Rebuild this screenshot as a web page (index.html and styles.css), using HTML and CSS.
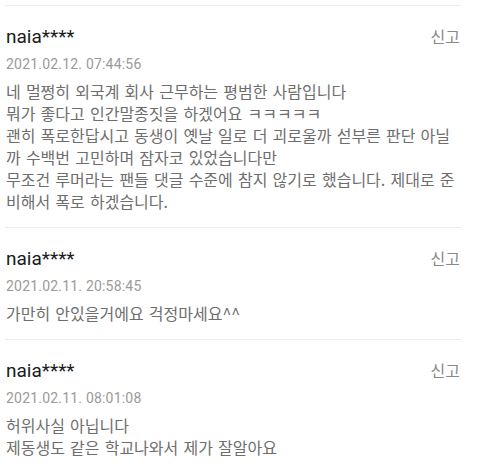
FILE: index.html
```html
<!DOCTYPE html>
<html lang="ko">
<head>
  <meta charset="UTF-8" />
  <meta name="viewport" content="width=device-width, initial-scale=1.0"/>
  <title>댓글</title>
  <link rel="stylesheet" href="styles.css">
</head>
<body>
  <ul class="comment-list">
    <li class="comment">
      <div class="comment-head">
        <span class="nick">naia****</span>
        <a class="report" href="#">신고</a>
      </div>
      <div class="date">2021.02.12. 07:44:56</div>
      <p class="text">네 멀쩡히 외국계 회사 근무하는 평범한 사람입니다<br>뭐가 좋다고 인간말종짓을 하겠어요 ㅋㅋㅋㅋㅋ<br>괜히 폭로한답시고 동생이 옛날 일로 더 괴로울까 섣부른 판단 아닐까 수백번 고민하며 잠자코 있었습니다만<br>무조건 루머라는 팬들 댓글 수준에 참지 않기로 했습니다. 제대로 준비해서 폭로 하겠습니다.</p>
    </li>
    <li class="comment">
      <div class="comment-head">
        <span class="nick">naia****</span>
        <a class="report" href="#">신고</a>
      </div>
      <div class="date">2021.02.11. 20:58:45</div>
      <p class="text">가만히 안있을거에요 걱정마세요^^</p>
    </li>
    <li class="comment">
      <div class="comment-head">
        <span class="nick">naia****</span>
        <a class="report" href="#">신고</a>
      </div>
      <div class="date">2021.02.11. 08:01:08</div>
      <p class="text">허위사실 아닙니다<br>제동생도 같은 학교나와서 제가 잘알아요</p>
    </li>
  </ul>
</body>
</html>
```

FILE: styles.css
```css
body {
  margin: 5px 19px 0 5px;
  background: #fff;
  font-family: Roboto, "Noto Sans CJK KR", sans-serif;
}
.comment-list {
  list-style: none;
  margin: 0;
  padding: 0;
}
.comment {
  border-top: 1px solid #ececec;
  padding: 18px 1px 15px 1px;
}
.comment-head {
  display: flex;
  justify-content: space-between;
  align-items: baseline;
}
.nick {
  font-size: 19px;
  line-height: 24px;
  color: #1b1b1b;
}
.report {
  font-family: "Noto Sans CJK KR", sans-serif;
  font-size: 16px;
  line-height: 24px;
  color: #8a8a8a;
  text-decoration: none;
}
.date {
  margin-top: 5px;
  font-size: 14px;
  line-height: 20px;
  letter-spacing: 0.2px;
  color: #9a9a9a;
}
.text {
  margin: 6px 0 0;
  font-family: "Noto Sans CJK KR", sans-serif;
  font-size: 16px;
  line-height: 22px;
  word-spacing: 0.7px;
  color: #6e6e6e;
}
```
